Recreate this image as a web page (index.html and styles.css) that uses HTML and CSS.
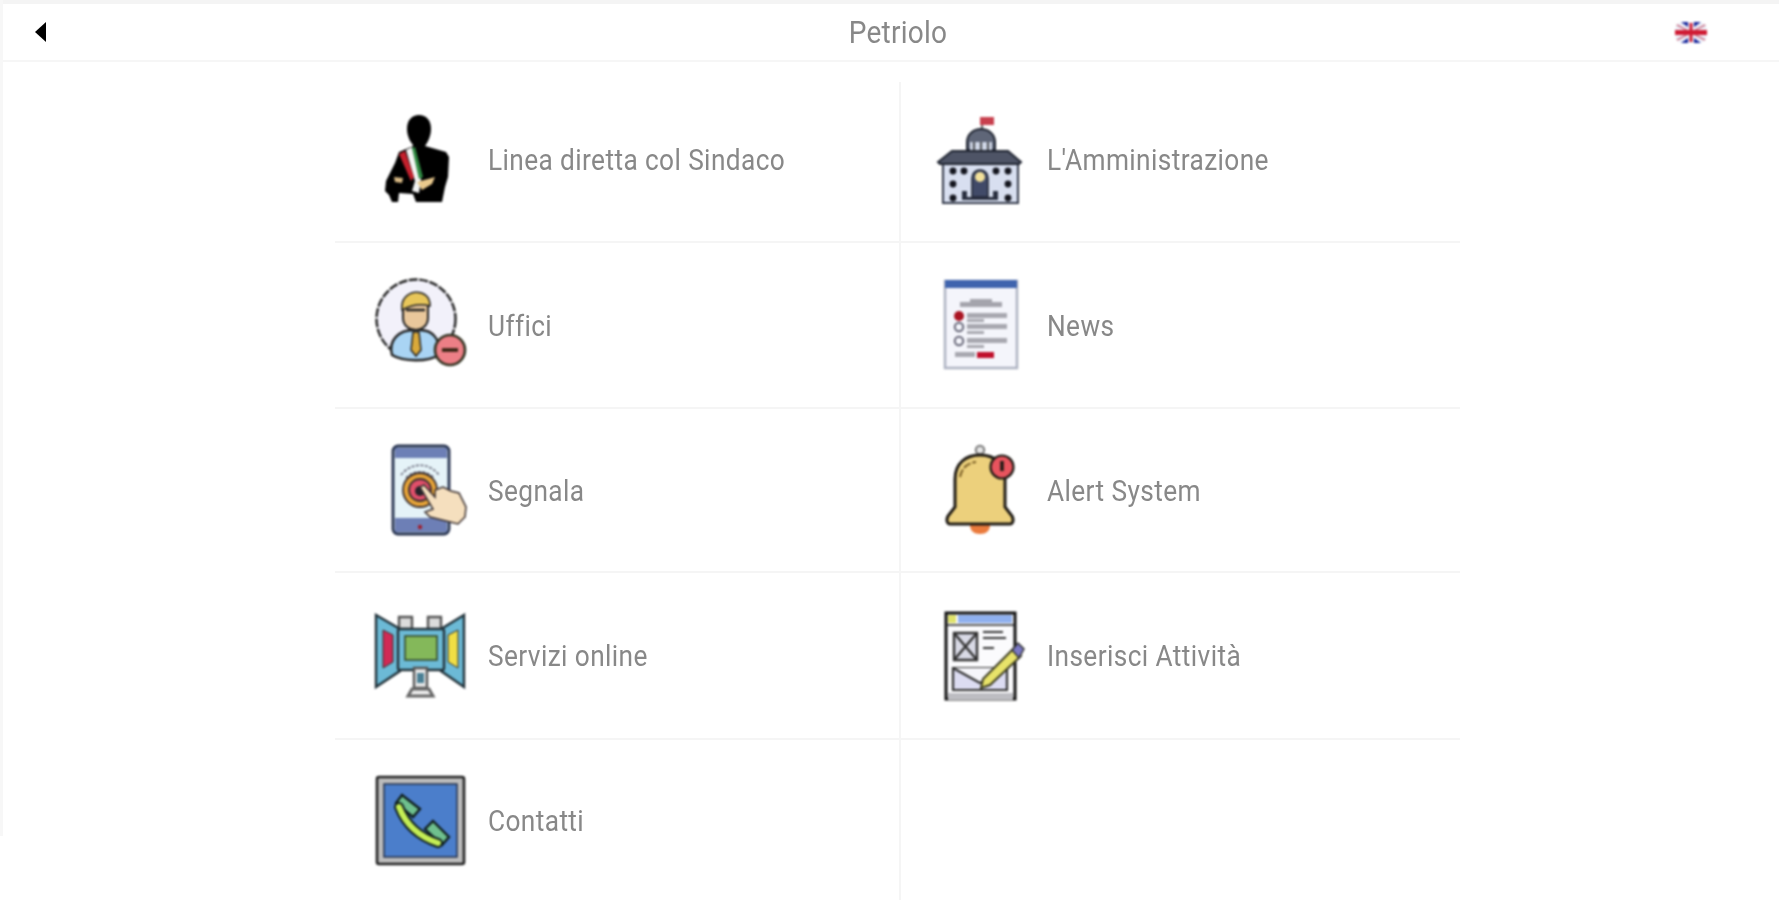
FILE: index.html
```html
<!DOCTYPE html>
<html lang="it">
<head>
<meta charset="utf-8">
<title>Petriolo</title>
<link rel="stylesheet" href="styles.css">
</head>
<body>
<div class="edge"></div>
<main class="app">
  <header class="bar">
    <svg class="back" viewBox="0 0 12 20"><path d="M12 0 L1 10 L12 20 Z"/></svg>
    <h1 class="title">Petriolo</h1>
    <svg class="flag" viewBox="0 0 32 21">
      <clipPath id="fc"><rect width="32" height="21" rx="8"/></clipPath>
      <g clip-path="url(#fc)">
        <rect width="32" height="21" fill="#eef0f8"/>
        <path d="M6 0 H13 V5 Z M26 0 H19 V5 Z M6 21 H13 V16 Z M26 21 H19 V16 Z" fill="#14249a"/>
        <path d="M0 2 L32 19 M32 2 L0 19" stroke="#c86a80" stroke-width="1.5"/>
        <path d="M16 1 V20" stroke="#d01c34" stroke-width="3"/>
        <path d="M0 10.5 H32" stroke="#d01c34" stroke-width="5"/>
      </g>
    </svg>
  </header>
  <section class="menu">
    <a class="item">
      <svg class="icon" viewBox="0 0 90 90">
        <path d="M32 14 C32 5 37 0 44 0 C51 0 56 5 56 14 C56 22 52 28 50 31 H39 C36 28 32 22 32 14 Z"/>
        <path d="M38 26 H50 V31 L71 37 L74 42 L73 62 L70 72 L67 87 H41 L38 79 L24 78 L23 87 H17 L14 80 L10 76 L11 66 L20 48 L24 37 L38 31 Z"/>
        <path d="M31 35 L37 32 L46 64 L44 78 L37 76 L40 66 Z" fill="#f4f4f4"/>
        <path d="M24 39 L30 36 L39 62 L36 66 Z" fill="#c4202c"/>
        <path d="M37 33 L40 32 L48 62 L44 64 Z" fill="#2f8a42"/>
        <path d="M19 62 L28 63 L27 68 L20 67 Z" fill="#d8b985"/>
        <path d="M42 67 L60 62 L57 69 L47 75 Z" fill="#e9c98d"/>
      </svg>
      <span class="label">Linea diretta col Sindaco</span>
    </a>
    <a class="item">
      <svg class="icon" viewBox="0 0 90 90">
        <path d="M48 18 V2" stroke="#333" stroke-width="1.5"/>
        <path d="M46 2 H60 V10 H46 Z" fill="#c8404e"/>
        <path d="M33 35 V27 C33 19 40 14 47 14 C54 14 61 19 61 27 V35 Z" fill="#5f6678" stroke="#1f2430" stroke-width="2"/>
        <path d="M36 27 H58 V35 H36 Z" fill="#cfd6e6"/>
        <path d="M40 27 V35 M47 27 V35 M54 27 V35" stroke="#222" stroke-width="1.5"/>
        <path d="M9 48 H84 V88 H9 Z" fill="#d8dff0" stroke="#333a4a" stroke-width="2"/>
        <path d="M18 36 H74 L87 47 L85 49 H6 L4 47 Z" fill="#4e5466" stroke="#1f2430" stroke-width="2"/>
        <g fill="#14161f">
          <circle cx="19" cy="56" r="3.4"/><circle cx="30" cy="56" r="3.4"/><circle cx="62" cy="56" r="3.4"/><circle cx="74" cy="56" r="3.4"/>
          <circle cx="19" cy="69" r="3.4"/><circle cx="74" cy="69" r="3.4"/><circle cx="19" cy="83" r="3.4"/><circle cx="74" cy="83" r="3.4"/>
        </g>
        <path d="M38 82 V63 C38 58 42 55 46 55 C50 55 54 58 54 63 V82 Z" fill="#414a68" stroke="#1f2430" stroke-width="1.5"/>
        <circle cx="46" cy="62" r="5" fill="#f3e19a"/>
        <path d="M28 85 V76 H33 V82 H59 V76 H64 V85 Z" fill="#2a2f40"/>
      </svg>
      <span class="label">L'Amministrazione</span>
    </a>
    <a class="item">
      <svg class="icon" viewBox="0 0 90 90">
        <circle cx="41" cy="39" r="39.5" fill="#f2f1fa" stroke="#222" stroke-width="2.4" stroke-dasharray="9 1.5"/>
        <path d="M17 75 C13 60 24 50 39 50 H45 C58 50 66 60 64 75 C54 82 28 82 17 75 Z" fill="#a9d4f4" stroke="#222" stroke-width="2.4"/>
        <path d="M28 24 C28 12 52 12 53 24 V38 C53 46 46 50 41 50 C35 50 28 46 28 38 Z" fill="#e9c79b" stroke="#222" stroke-width="2"/>
        <path d="M27 30 C24 8 56 6 55 26 C48 24 38 24 27 30 Z" fill="#e8c65a" stroke="#222" stroke-width="1.5"/>
        <path d="M31 30 H50" stroke="#222" stroke-width="2.5"/>
        <path d="M38 52 H44 L46 70 L41 76 L36 70 Z" fill="#d9a93a" stroke="#222" stroke-width="1.5"/>
        <circle cx="75" cy="70" r="15" fill="#ec7f86" stroke="#332" stroke-width="2.6"/>
        <path d="M67 70 H83" stroke="#321" stroke-width="3.6"/>
      </svg>
      <span class="label">Uffici</span>
    </a>
    <a class="item">
      <svg class="icon" viewBox="0 0 90 90">
        <path d="M11 1 H83 V88 H11 Z" fill="#f4f5fb" stroke="#aeb3c2" stroke-width="2.5"/>
        <path d="M11 0 H83 V8 H11 Z" fill="#3f64ae"/>
        <path d="M36 19 H58 V22 H68 V27 H26 V22 H36 Z" fill="#a4a4ac"/>
        <circle cx="25" cy="36" r="5" fill="#aa1422"/>
        <circle cx="25" cy="47" r="4.2" fill="none" stroke="#667" stroke-width="2"/>
        <circle cx="25" cy="61" r="4.2" fill="none" stroke="#667" stroke-width="2"/>
        <path d="M33 33 H73 V38 H33 Z M33 39 H50 V42 H33 Z M33 44 H73 V49 H33 Z M33 51 H50 V54 H33 Z M33 58 H73 V63 H33 Z M33 65 H50 V68 H33 Z M21 72 H41 V77 H21 Z" fill="#a8a8b0"/>
        <path d="M43 72 H60 V78 H43 Z" fill="#c0102c"/>
      </svg>
      <span class="label">News</span>
    </a>
    <a class="item">
      <svg class="icon" viewBox="0 0 90 90">
        <rect x="18" y="1" width="56" height="88" rx="5" fill="#e5f3f8" stroke="#26324f" stroke-width="2.8"/>
        <path d="M20 3 H72 V13 H20 Z M20 73 H72 V87 H20 Z" fill="#6d7fb6"/>
        <path d="M26 30 C36 17 54 17 64 30 M31 33 C38 25 52 25 59 33" fill="none" stroke="#667" stroke-width="1.6" stroke-dasharray="3 1.5"/>
        <circle cx="45" cy="45" r="17" fill="#e6a338" stroke="#3a3030" stroke-width="1.8"/>
        <circle cx="45" cy="45" r="11" fill="#e04f6a" stroke="#3a3030" stroke-width="1.8"/>
        <circle cx="45" cy="46" r="5" fill="#26222a"/>
        <path d="M45 42 L49 40 L60 52 L60 45 L68 42 L76 46 L84 48 L91 62 L90 72 L83 79 L71 76 L55 72 L50 67 L58 64 Z" fill="#f5dfbe" stroke="#3a3030" stroke-width="1.5"/>
        <circle cx="45" cy="82" r="2.2" fill="#a02030"/>
      </svg>
      <span class="label">Segnala</span>
    </a>
    <a class="item">
      <svg class="icon" viewBox="0 0 90 90">
        <circle cx="46" cy="5" r="4.2" fill="#e4e4e4" stroke="#777" stroke-width="2"/>
        <path d="M36 80 H56 C56 86 52 89 46 89 C40 89 36 86 36 80 Z" fill="#ea7a3c"/>
        <path d="M21 62 V34 C21 18 32 10 46 10 C60 10 71 18 71 34 V62 L78 71 C80 75 79 79 76 79 H16 C13 79 12 75 14 71 Z" fill="#ecd07c" stroke="#1e1a14" stroke-width="3"/>
        <path d="M26 32 C28 22 34 18 42 17" fill="none" stroke="#7a5e25" stroke-width="2" stroke-dasharray="8 2"/>
        <circle cx="68" cy="22" r="11.5" fill="#e8545e" stroke="#1e1a14" stroke-width="2.2"/>
        <path d="M68 16 V26" stroke="#1e1a14" stroke-width="3.5"/>
      </svg>
      <span class="label">Alert System</span>
    </a>
    <a class="item">
      <svg class="icon" viewBox="0 0 90 90">
        <path d="M24 6 H37 V18 H24 Z M53 6 H66 V18 H53 Z" fill="#dcdcdc" stroke="#555" stroke-width="2.4"/>
        <path d="M1 4 L25 18 V60 L1 76 Z M89 4 L66 18 V60 L89 76 Z" fill="#6cbad6" stroke="#23343c" stroke-width="2.4"/>
        <path d="M8 19 L18 24 V51 L8 57 Z" fill="#d02a55" stroke="#333" stroke-width="1"/>
        <path d="M83 19 L73 24 V51 L83 57 Z" fill="#f0de45" stroke="#333" stroke-width="1"/>
        <rect x="23" y="18" width="46" height="41" rx="2" fill="#6cbad6" stroke="#23343c" stroke-width="2.4"/>
        <rect x="30" y="25" width="32" height="24" fill="#84b85a" stroke="#2f4428" stroke-width="1.5"/>
        <path d="M39 57 H52 V77 H39 Z" fill="#e8e8e8" stroke="#555" stroke-width="2.4"/>
        <path d="M42 62 H49 V72 H42 Z" fill="#4a7f94"/>
        <path d="M33 85 L37 78 H54 L58 85 Z" fill="#efefef" stroke="#666" stroke-width="3"/>
      </svg>
      <span class="label">Servizi online</span>
    </a>
    <a class="item">
      <svg class="icon" viewBox="0 0 90 90">
        <path d="M12 2 H81 V88 H12 Z" fill="#fbfbfd" stroke="#111" stroke-width="3"/>
        <path d="M24 4 H78 V12 H24 Z" fill="#8fb0ee"/>
        <path d="M14 4 H22 V12 H14 Z" fill="#dfe26a"/>
        <path d="M12 14 H81" stroke="#222" stroke-width="1.5"/>
        <path d="M20 22 H43 V49 H20 Z M20 22 L43 49 M43 22 L20 49" fill="#d9dae6" stroke="#333" stroke-width="2.4"/>
        <path d="M49 21 H69 M49 27 H72 M49 37 H60" stroke="#333" stroke-width="2"/>
        <path d="M19 57 H73 V79 H19 Z" fill="#dcdcf2" stroke="#333" stroke-width="2.2"/>
        <path d="M19 57 L46 72 L73 57" fill="#f6f6fb" stroke="#333" stroke-width="2.2"/>
        <path d="M14 82 H79 V89 H14 Z" fill="#bdbdc2"/>
        <path d="M49 68 L80 37 L87 45 L56 74 L47 77 Z" fill="#e8e36a" stroke="#3d3d22" stroke-width="2"/>
        <path d="M78 39 L84 32 L90 38 L85 47 Z" fill="#7a78c4" stroke="#333" stroke-width="1.5"/>
      </svg>
      <span class="label">Inserisci Attività</span>
    </a>
    <a class="item">
      <svg class="icon" viewBox="0 0 90 90">
        <rect x="2" y="2" width="87" height="87" rx="2" fill="#bdbdbd" stroke="#222" stroke-width="2.6"/>
        <rect x="9" y="9" width="73" height="73" fill="#4b7ecb" stroke="#25304a" stroke-width="1.5"/>
        <path d="M27 20 L45 34 L38 42 L21 28 Z M58 46 L74 62 L67 70 L50 54 Z" fill="#6fc08e" stroke="#10201f" stroke-width="2.4"/>
        <path d="M24 32 C31 50 45 62 63 68" fill="none" stroke="#10201f" stroke-width="10" stroke-linecap="round"/>
        <path d="M24 32 C31 50 45 62 63 68" fill="none" stroke="#c4ee55" stroke-width="6" stroke-linecap="round"/>
      </svg>
      <span class="label">Contatti</span>
    </a>
    <div class="item"></div>
  </section>
</main>
</body>
</html>
```
FILE: styles.css
```css
* { box-sizing: border-box; }
html, body { margin: 0; height: 900px; overflow: hidden; background: #fff; }
body { display: flex; align-items: flex-start; font-family: "Roboto", "Liberation Sans", sans-serif; color: #888; }
.edge { width: 3px; height: 836px; flex: none; background: #f7f7f7; }
.app { flex: 1; min-width: 0; }
.bar {
  display: grid;
  grid-template-columns: 804px 120px 1fr;
  align-items: center;
  height: 62px;
  padding: 0 72px 0 31px;
  border-top: 4px solid #f4f4f4;
  border-bottom: 2px solid #f6f6f6;
}
.back { width: 12px; height: 20px; fill: #000; filter: blur(.6px); }
.title { margin: 0; font-size: 32px; font-weight: 400; letter-spacing: .3px; text-align: center; white-space: nowrap; transform: scaleX(.875); filter: blur(.6px); }
.flag { width: 32px; height: 21px; justify-self: end; filter: blur(.9px); }
.menu {
  display: grid;
  grid-template-columns: 566px 559px;
  grid-template-rows: 161px 166px 164px 167px 160px;
  width: 1125px;
  margin: 20px 0 0 332px;
}
.item {
  display: flex;
  align-items: center;
  gap: 23px;
  padding-left: 33px;
  border-bottom: 2px solid #f5f5f5;
}
.item:nth-child(odd) { border-right: 2px solid #f5f5f5; padding-left: 40px; }
.item:nth-child(-n+2) { padding-bottom: 4px; }
.item:nth-last-child(-n+2) { border-bottom: 0; }
.icon { width: 90px; height: 90px; flex: none; overflow: visible; filter: blur(.8px); }
.label { font-size: 30px; letter-spacing: .45px; white-space: nowrap; transform: scaleX(.875); transform-origin: left center; filter: blur(.6px); }
```
